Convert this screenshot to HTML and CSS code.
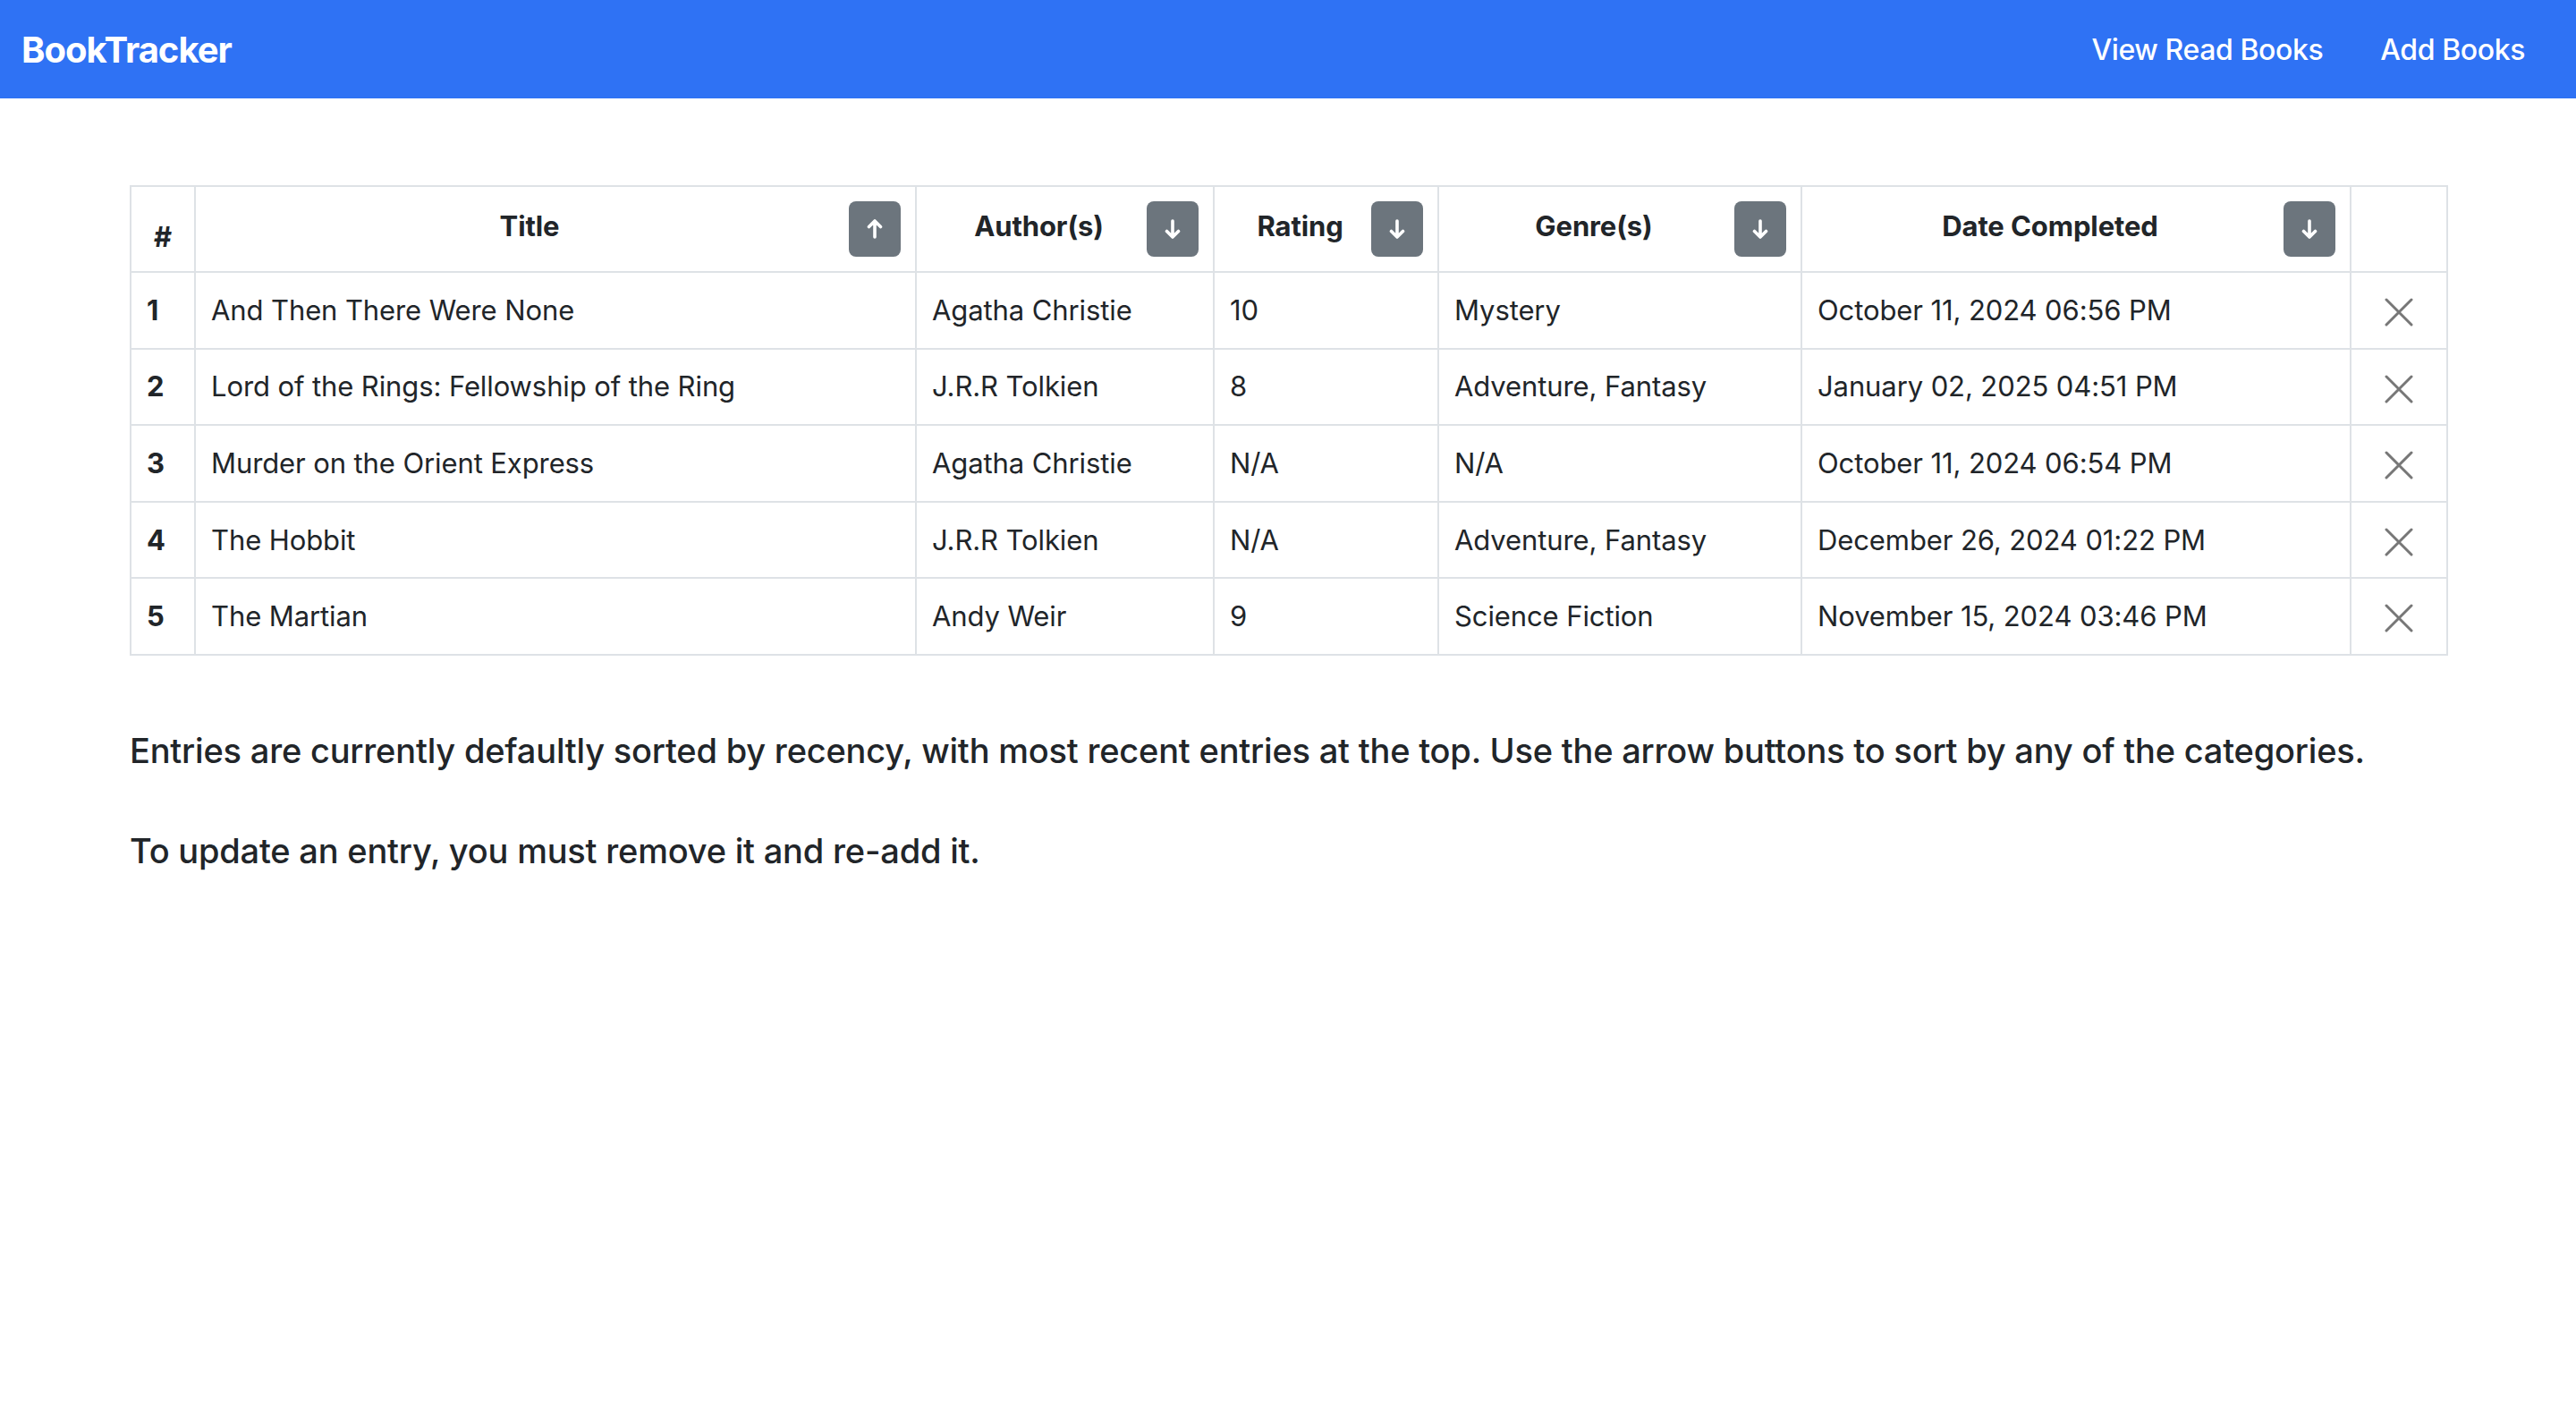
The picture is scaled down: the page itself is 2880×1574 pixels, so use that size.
FILE: index.html
```html
<!DOCTYPE html>
<html lang="en">
<head>
<meta charset="utf-8">
<title>BookTracker</title>
<link rel="stylesheet" href="styles.css">
</head>
<body>
<nav class="navbar">
  <a class="brand" href="#">BookTracker</a>
  <div class="nav-links">
    <a class="nav-link" href="#">View Read Books</a>
    <a class="nav-link" href="#">Add Books</a>
  </div>
</nav>
<main class="container">
  <table class="books">
    <colgroup>
      <col class="c-num"><col class="c-title"><col class="c-author"><col class="c-rating"><col class="c-genre"><col class="c-date"><col class="c-del">
    </colgroup>
    <thead>
      <tr>
        <th class="th-num">#</th>
        <th><div class="th-inner"><span class="th-label">Title</span><button class="sort-btn" type="button"><svg viewBox="0 0 20 24" class="arrow"><path d="M10 3V21M3.5 9.5L10 3L16.5 9.5"/></svg></button></div></th>
        <th><div class="th-inner"><span class="th-label">Author(s)</span><button class="sort-btn" type="button"><svg viewBox="0 0 20 24" class="arrow"><path d="M10 3V21M3.5 14.5L10 21L16.5 14.5"/></svg></button></div></th>
        <th><div class="th-inner"><span class="th-label">Rating</span><button class="sort-btn" type="button"><svg viewBox="0 0 20 24" class="arrow"><path d="M10 3V21M3.5 14.5L10 21L16.5 14.5"/></svg></button></div></th>
        <th><div class="th-inner"><span class="th-label">Genre(s)</span><button class="sort-btn" type="button"><svg viewBox="0 0 20 24" class="arrow"><path d="M10 3V21M3.5 14.5L10 21L16.5 14.5"/></svg></button></div></th>
        <th><div class="th-inner"><span class="th-label">Date Completed</span><button class="sort-btn" type="button"><svg viewBox="0 0 20 24" class="arrow"><path d="M10 3V21M3.5 14.5L10 21L16.5 14.5"/></svg></button></div></th>
        <th></th>
      </tr>
    </thead>
    <tbody>
      <tr>
        <th class="row-num">1</th><td>And Then There Were None</td><td>Agatha Christie</td><td>10</td><td>Mystery</td><td>October 11, 2024 06:56 PM</td>
        <td class="del"><svg viewBox="0 0 32 32" class="x-icon"><path d="M2 2L30 30M30 2L2 30"/></svg></td>
      </tr>
      <tr>
        <th class="row-num">2</th><td>Lord of the Rings: Fellowship of the Ring</td><td>J.R.R Tolkien</td><td>8</td><td>Adventure, Fantasy</td><td>January 02, 2025 04:51 PM</td>
        <td class="del"><svg viewBox="0 0 32 32" class="x-icon"><path d="M2 2L30 30M30 2L2 30"/></svg></td>
      </tr>
      <tr>
        <th class="row-num">3</th><td>Murder on the Orient Express</td><td>Agatha Christie</td><td>N/A</td><td>N/A</td><td>October 11, 2024 06:54 PM</td>
        <td class="del"><svg viewBox="0 0 32 32" class="x-icon"><path d="M2 2L30 30M30 2L2 30"/></svg></td>
      </tr>
      <tr>
        <th class="row-num">4</th><td>The Hobbit</td><td>J.R.R Tolkien</td><td>N/A</td><td>Adventure, Fantasy</td><td>December 26, 2024 01:22 PM</td>
        <td class="del"><svg viewBox="0 0 32 32" class="x-icon"><path d="M2 2L30 30M30 2L2 30"/></svg></td>
      </tr>
      <tr>
        <th class="row-num">5</th><td>The Martian</td><td>Andy Weir</td><td>9</td><td>Science Fiction</td><td>November 15, 2024 03:46 PM</td>
        <td class="del"><svg viewBox="0 0 32 32" class="x-icon"><path d="M2 2L30 30M30 2L2 30"/></svg></td>
      </tr>
    </tbody>
  </table>
  <p class="note">Entries are currently defaultly sorted by recency, with most recent entries at the top. Use the arrow buttons to sort by any of the categories.</p>
  <p class="note">To update an entry, you must remove it and re-add it.</p>
</main>
</body>
</html>
```
FILE: styles.css
```css
* { box-sizing: border-box; }

body {
  margin: 0;
  font-family: Inter, "Noto Sans", sans-serif;
  color: #212529;
  background: #ffffff;
}

.navbar {
  height: 110px;
  background: #2f72f4;
  display: flex;
  align-items: center;
  justify-content: space-between;
  padding: 0 57px 0 24px;
}

.brand {
  font-weight: 700;
  font-size: 40px;
  letter-spacing: -1px;
  color: #ffffff;
  text-decoration: none;
}

.nav-links {
  display: flex;
  gap: 64px;
}

.nav-link {
  font-size: 32px;
  font-weight: 500;
  letter-spacing: -0.4px;
  color: #ffffff;
  text-decoration: none;
}

.container {
  margin: 97px 145px 0;
}

.books {
  width: 100%;
  table-layout: fixed;
  border-collapse: collapse;
  font-size: 31px;
  line-height: 48px;
  letter-spacing: -0.1px;
  margin-bottom: 78px;
}

.c-num { width: 72px; }
.c-title { width: 806px; }
.c-author { width: 333px; }
.c-rating { width: 251px; }
.c-genre { width: 406px; }
.c-date { width: 614px; }
.c-del { width: 108px; }

.books th,
.books td {
  border: 2px solid #dee2e6;
  padding: 17.8px 17px;
  text-align: left;
  vertical-align: middle;
  white-space: nowrap;
}

.books thead th {
  padding: 16px 16px;
  font-weight: 700;
  vertical-align: bottom;
  text-align: center;
}

.books thead th.th-num {
  padding-bottom: 14px;
}

.th-inner {
  display: flex;
  align-items: center;
}

.th-label {
  flex: 1;
  text-align: center;
  margin-top: -6px;
}

.sort-btn {
  width: 58px;
  height: 62px;
  border: none;
  border-radius: 8px;
  background: #6c757d;
  padding: 0;
  display: flex;
  align-items: center;
  justify-content: center;
}

.arrow {
  width: 20px;
  height: 24px;
  fill: none;
  stroke: #ffffff;
  stroke-width: 3.6;
  stroke-linecap: round;
  stroke-linejoin: round;
}

.row-num {
  font-weight: 700;
}

.books td.del {
  text-align: center;
  padding-top: 20px;
  padding-bottom: 15.6px;
}

.x-icon {
  width: 32px;
  height: 32px;
  display: block;
  margin: 0 auto;
  fill: none;
  stroke: #777777;
  stroke-width: 3;
  stroke-linecap: round;
}

.note {
  margin: 0 0 55px;
  font-size: 38px;
  font-weight: 500;
  line-height: 57px;
  letter-spacing: -0.2px;
}
```
